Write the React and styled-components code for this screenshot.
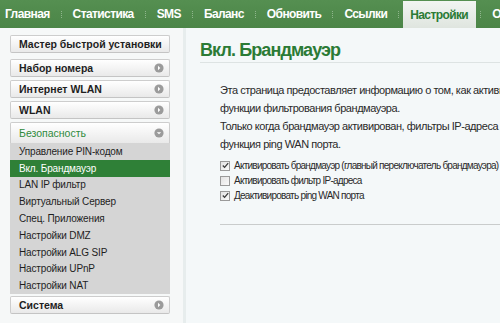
import React from 'react';
import styled, { createGlobalStyle } from 'styled-components';

const GlobalStyle = createGlobalStyle`
  html, body {
    margin: 0;
    padding: 0;
    overflow: hidden;
    background: #f4f8f9;
  }
  body {
    font-family: 'Liberation Sans', Arial, sans-serif;
    color: #222;
  }
`;

const Page = styled.div`
  width: 780px;
`;

const TopNav = styled.nav`
  height: 28px;
  background: linear-gradient(#558f51, #4b8547);
  display: flex;
  align-items: stretch;
  margin-left: -2px;
`;

const NavItem = styled.div`
  display: flex;
  align-items: center;
  padding: ${(p) => (p.$active ? '0 8px 0 7px' : '0 7px')};
  margin-top: ${(p) => (p.$active ? '1px' : '0')};
  font-size: 12px;
  letter-spacing: -0.6px;
  font-weight: bold;
  color: ${(p) => (p.$active ? '#2b7b36' : '#fff')};
  background: ${(p) => (p.$active ? 'linear-gradient(#f2f5f2, #dfe5df)' : 'none')};
  white-space: nowrap;
`;

const NavSep = styled.div`
  align-self: center;
  width: 0;
  height: 7px;
  margin: 0 4px;
  border-left: 1px dotted #8fb58c;
`;

const Main = styled.div`
  display: flex;
`;

const Sidebar = styled.aside`
  width: 183px;
  flex-shrink: 0;
  box-sizing: border-box;
  padding: 7px 0 0 10px;
  background: #f6f8f8;
`;

const MenuBox = styled.div`
  width: 160px;
  box-sizing: border-box;
  height: ${(p) => (p.$open ? '21px' : '18px')};
  margin-bottom: ${(p) => (p.$gap === undefined ? 3 : p.$gap)}px;
  padding: 0 5px 0 8px;
  display: flex;
  align-items: center;
  justify-content: space-between;
  border: 1px solid #cdcdcd;
  border-bottom: ${(p) => (p.$open ? 'none' : '1px solid #c4c4c4')};
  border-radius: 2px 2px ${(p) => (p.$open ? '0 0' : '2px 2px')};
  background: linear-gradient(#ffffff, #e9e9e9);
  font-size: 10.5px;
  font-weight: ${(p) => (p.$open ? 'normal' : 'bold')};
  color: ${(p) => (p.$open ? '#2e8a3b' : '#1e1e1e')};
  white-space: nowrap;
`;

const SubMenu = styled.div`
  width: 160px;
  background: #d5d5d5;
  margin-bottom: 2px;
`;

const SubItem = styled.div`
  height: 16.8px;
  display: flex;
  align-items: center;
  padding-left: 9px;
  font-size: 10px;
  letter-spacing: -0.15px;
  color: ${(p) => (p.$active ? '#fff' : '#1e1e1e')};
  background: ${(p) => (p.$active ? '#2f8037' : 'transparent')};
  white-space: nowrap;
`;

const Content = styled.main`
  flex: 1;
  min-height: 295px;
  border-left: 3px solid #e7eded;
  padding: 11px 0 0 14px;
  background: #f4f8f9;
`;

const Title = styled.h1`
  margin: 0;
  font-size: 18px;
  line-height: 22px;
  letter-spacing: -0.9px;
  font-weight: bold;
  color: #2b7b36;
  padding-bottom: 1px;
  border-bottom: 1px solid #dde3e3;
`;

const Body = styled.div`
  padding: 18px 0 0 20px;
`;

const Line = styled.div`
  font-size: 11px;
  line-height: 18px;
  letter-spacing: -0.45px;
  color: #2a2a2a;
  white-space: nowrap;
`;

const Options = styled.div`
  margin-top: 5px;
`;

const Option = styled.label`
  display: flex;
  align-items: center;
  height: 15px;
  font-size: 10px;
  letter-spacing: -0.75px;
  color: #2a2a2a;
  white-space: nowrap;
`;

const Box = styled.span`
  width: 8px;
  height: 8px;
  margin-right: 4px;
  border: 1px solid #9a9a9a;
  background: linear-gradient(135deg, #e2e2e2, #fafafa);
  display: flex;
  align-items: center;
  justify-content: center;
`;

const Rule = styled.hr`
  margin: 21px 0 0 0;
  border: none;
  border-top: 1px solid #c9cccc;
`;

const Arrow = ({ down }) => (
  <svg width="10" height="10" viewBox="0 0 10 10">
    <circle cx="5" cy="5" r="4.6" fill="#9b9b9b" />
    {down ? (
      <path d="M2.8 4.2 H7.2 L5 6.3 Z" fill="#fff" />
    ) : (
      <path d="M4 2.8 V7.2 L6.3 5 Z" fill="#fff" />
    )}
  </svg>
);

const Check = ({ on }) => (
  <Box>
    {on && (
      <svg width="7" height="7" viewBox="0 0 7 7">
        <path d="M0.8 3.5 L2.6 5.4 L6.2 1.2" stroke="#3a3a3a" strokeWidth="1.3" fill="none" />
      </svg>
    )}
  </Box>
);

const tabs = ['Главная', 'Статистика', 'SMS', 'Баланс', 'Обновить', 'Ссылки', 'Настройки', 'О модеме'];

const menu = ['Набор номера', 'Интернет WLAN', 'WLAN'];

const security = [
  'Управление PIN-кодом',
  'Вкл. Брандмауэр',
  'LAN IP фильтр',
  'Виртуальный Сервер',
  'Спец. Приложения',
  'Настройки DMZ',
  'Настройки ALG SIP',
  'Настройки UPnP',
  'Настройки NAT',
];

const options = [
  { label: 'Активировать брандмауэр (главный переключатель брандмауэра)', on: true },
  { label: 'Активировать фильтр IP-адреса', on: false },
  { label: 'Деактивировать ping WAN порта', on: true },
];

const App = () => (
  <Page>
    <GlobalStyle />
    <TopNav>
      {tabs.map((t, i) => (
        <React.Fragment key={t}>
          {i > 0 && <NavSep />}
          <NavItem $active={t === 'Настройки'}>{t}</NavItem>
        </React.Fragment>
      ))}
    </TopNav>
    <Main>
      <Sidebar>
        <MenuBox $gap={6}>Мастер быстрой установки</MenuBox>
        {menu.map((m) => (
          <MenuBox key={m}>
            {m}
            <Arrow />
          </MenuBox>
        ))}
        <MenuBox $open $gap={0}>
          Безопасность
          <Arrow down />
        </MenuBox>
        <SubMenu>
          {security.map((s) => (
            <SubItem key={s} $active={s === 'Вкл. Брандмауэр'}>{s}</SubItem>
          ))}
        </SubMenu>
        <MenuBox>
          Система
          <Arrow />
        </MenuBox>
      </Sidebar>
      <Content>
        <Title>Вкл. Брандмауэр</Title>
        <Body>
          <Line>Эта страница предоставляет информацию о том, как активировать и деактивировать</Line>
          <Line>функции фильтрования брандмауэра.</Line>
          <Line>Только когда брандмауэр активирован, фильтры IP-адреса функционируют так же, как и</Line>
          <Line>функция ping WAN порта.</Line>
          <Options>
            {options.map((o) => (
              <Option key={o.label}>
                <Check on={o.on} />
                {o.label}
              </Option>
            ))}
          </Options>
          <Rule />
        </Body>
      </Content>
    </Main>
  </Page>
);

export default App;
